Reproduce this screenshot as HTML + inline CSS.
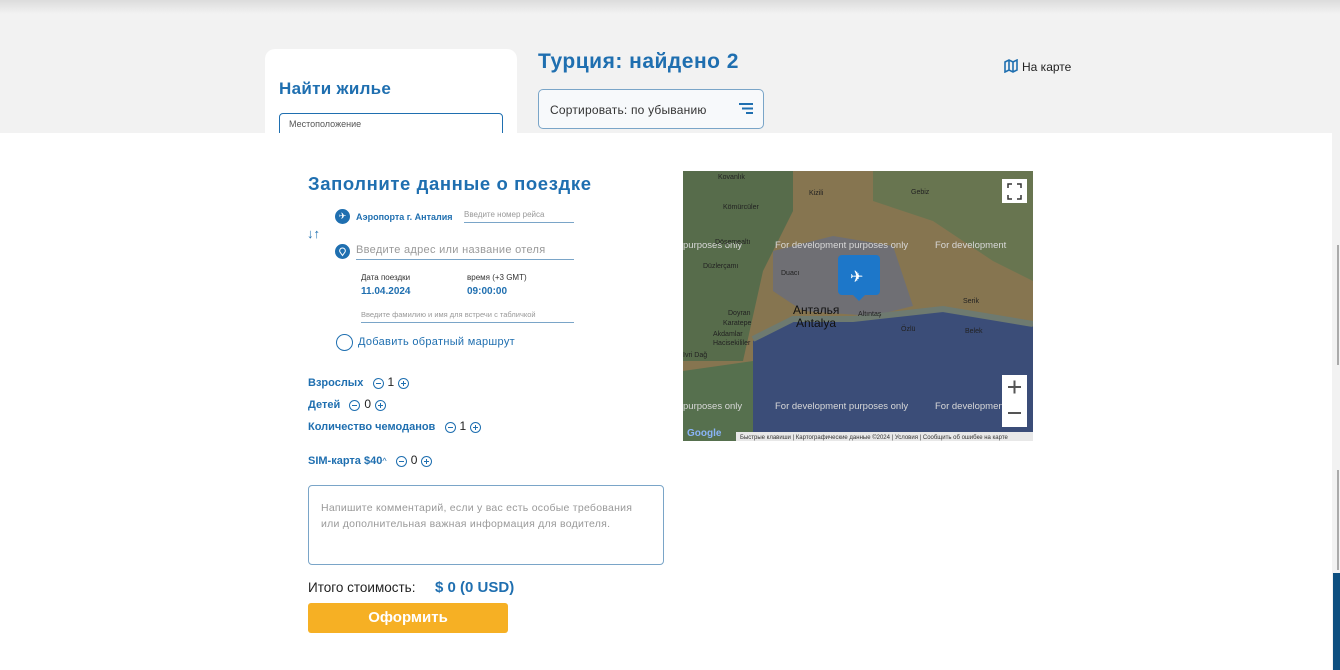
<!DOCTYPE html>
<html><head><meta charset="utf-8">
<style>
*{box-sizing:border-box;margin:0;padding:0}
body{width:1340px;height:670px;overflow:hidden;background:#f2f2f2;font-family:"Liberation Sans",sans-serif;position:relative}
.topshadow{position:absolute;left:0;top:0;width:1340px;height:14px;background:linear-gradient(#dcdcdc,#f2f2f2)}
.abs{position:absolute}
.blue{color:#1f6fb0}
.card{left:265px;top:49px;width:252px;height:100px;background:#fff;border-radius:10px}
.panel{left:0;top:133px;width:1332px;height:537px;background:#fff}
.line{border-bottom:1px solid #7aa5c8}
.ic{display:inline-block;width:11px;height:11px;border:1px solid #1f6fb0;border-radius:50%;position:relative;vertical-align:middle}
.ic:before{content:"";position:absolute;left:2px;right:2px;top:4px;height:1px;background:#1f6fb0}
.ic.p:after{content:"";position:absolute;top:2px;bottom:2px;left:4px;width:1px;background:#1f6fb0}
.cnt{font-size:11px;font-weight:bold;color:#1f6fb0;position:absolute;white-space:nowrap}
.cnt span.n{color:#222;font-weight:normal;font-size:12px;margin:0 4px}
</style></head><body>
<div class="topshadow"></div>
<div class="abs card"></div>
<div class="abs blue" style="left:279px;top:79px;font-size:17px;font-weight:bold;letter-spacing:.3px">Найти жилье</div>
<div class="abs" style="left:279px;top:113px;width:224px;height:30px;border:1px solid #1f6fb0;border-radius:4px;font-size:9px;color:#555;padding:5px 9px">Местоположение</div>
<div class="abs blue" style="left:538px;top:50px;font-size:21px;font-weight:bold;letter-spacing:.5px">Турция: найдено 2</div>
<div class="abs" style="left:538px;top:89px;width:226px;height:40px;border:1px solid #7aa5c8;border-radius:5px;background:#f7f9fb;font-size:12px;color:#333;padding:13px 11px;letter-spacing:.2px">Сортировать: по убыванию
<svg class="abs" style="left:200px;top:13px" width="14" height="12"><path d="M0 1h14M3 5.5h11M7 10h7" stroke="#1f6fb0" stroke-width="2"/></svg></div>
<div class="abs" style="left:1004px;top:59px;font-size:12px;color:#222"><svg width="14" height="14" style="vertical-align:-2px;margin-right:4px"><path d="M1 3l4-2 4 2 4-2v10l-4 2-4-2-4 2z M5 1v10 M9 3v10" fill="none" stroke="#1f6fb0" stroke-width="1.6"/></svg>На карте</div>
<div class="abs panel"></div>
<div class="abs" style="left:1332px;top:133px;width:8px;height:537px;background:#f2f2f2"></div>
<div class="abs" style="left:1337px;top:245px;width:2px;height:120px;background:#aaa"></div>
<div class="abs" style="left:1337px;top:470px;width:2px;height:100px;background:#aaa"></div>
<div class="abs" style="left:1333px;top:573px;width:7px;height:97px;background:#0d4f80"></div>

<div class="abs blue" style="left:308px;top:173px;font-size:18.5px;font-weight:bold;letter-spacing:.6px">Заполните данные о поездке</div>
<div class="abs" style="left:335px;top:209px;width:15px;height:15px;border-radius:50%;background:#1f6fb0;color:#fff;font-size:9px;text-align:center;line-height:15px">✈</div>
<div class="abs blue" style="left:356px;top:212px;font-size:9px;font-weight:bold">Аэропорта г. Анталия</div>
<div class="abs line" style="left:464px;top:210px;width:110px;height:13px;font-size:8px;color:#999">Введите номер рейса</div>
<div class="abs blue" style="left:307px;top:226px;font-size:13px;font-weight:bold">↓↑</div>
<div class="abs" style="left:335px;top:244px;width:15px;height:15px;border-radius:50%;background:#1f6fb0"><svg width="15" height="15"><path d="M7.5 11.5l-2.5-3.5a2.8 2.8 0 1 1 5 0z" fill="none" stroke="#fff" stroke-width="1"/></svg></div>
<div class="abs line" style="left:356px;top:244px;width:218px;height:16px;font-size:11px;color:#999;letter-spacing:.3px">Введите адрес или название отеля</div>
<div class="abs" style="left:361px;top:273px;font-size:8px;color:#333">Дата поездки</div>
<div class="abs blue" style="left:361px;top:286px;font-size:10px;font-weight:bold">11.04.2024</div>
<div class="abs" style="left:467px;top:273px;font-size:8px;color:#333">время (+3 GMT)</div>
<div class="abs blue" style="left:467px;top:286px;font-size:10px;font-weight:bold">09:00:00</div>
<div class="abs line" style="left:361px;top:310px;width:213px;height:13px;font-size:7.5px;color:#999">Введите фамилию и имя для встречи с табличкой</div>
<div class="abs" style="left:336px;top:334px;width:17px;height:17px;border-radius:50%;border:1px solid #1f6fb0"></div>
<div class="abs blue" style="left:358px;top:336px;font-size:11px;letter-spacing:.3px">Добавить обратный маршрут</div>

<div class="cnt" style="left:308px;top:375px">Взрослых &nbsp;&nbsp;<span class="ic"></span><span class="n">1</span><span class="ic p"></span></div>
<div class="cnt" style="left:308px;top:397px">Детей &nbsp;&nbsp;<span class="ic"></span><span class="n">0</span><span class="ic p"></span></div>
<div class="cnt" style="left:308px;top:419px">Количество чемоданов &nbsp;&nbsp;<span class="ic"></span><span class="n">1</span><span class="ic p"></span></div>
<div class="cnt" style="left:308px;top:453px">SIM-карта $40<span style="font-weight:normal;font-size:9px">^</span> &nbsp;&nbsp;<span class="ic"></span><span class="n">0</span><span class="ic p"></span></div>

<div class="abs" style="left:308px;top:485px;width:356px;height:80px;border:1px solid #7aa5c8;border-radius:4px;padding:14px 12px;font-size:10.5px;line-height:16px;color:#999;letter-spacing:.25px">Напишите комментарий, если у вас есть особые требования или дополнительная важная информация для водителя.</div>
<div class="abs" style="left:308px;top:580px;font-size:13.5px;color:#222">Итого стоимость:</div>
<div class="abs blue" style="left:435px;top:579px;font-size:15px;font-weight:bold">$ 0 (0 USD)</div>
<div class="abs" style="left:308px;top:603px;width:200px;height:30px;background:#f6b024;border-radius:3px;color:#fff;font-size:15px;font-weight:bold;text-align:center;line-height:30px">Оформить</div>

<svg class="abs" style="left:683px;top:171px" width="350" height="270" font-family="Liberation Sans" >
<rect width="350" height="270" fill="#867550"/>
<path d="M0 0h110v40l-30 60-20 90-60 0z" fill="#4f6b4a" opacity=".85"/>
<path d="M0 200l70 -10 0 80h-70z" fill="#56704e"/>
<path d="M190 0h160v110l-40-20-60-40-60-20z" fill="#607650" opacity=".8"/>
<path d="M90 80l60-15 60 10 20 60-40 10-70-5-30-20z" fill="#6f6f74"/>
<path d="M70 170l40-20 60 0 90 -10 90 15v135h-280l0-70z" fill="#3b4d78"/>
<path d="M70 168l40-20 60 0 90-10 90 15" fill="none" stroke="#6e7a70" stroke-width="6"/>
<g font-size="9.5" fill="#d8d8d8">
<text x="0" y="77">purposes only</text><text x="92" y="77">For development purposes only</text><text x="252" y="77">For development</text>
<text x="0" y="238">purposes only</text><text x="92" y="238">For development purposes only</text><text x="252" y="238">For development</text>
</g>
<g font-size="7" fill="#222"><text x="35" y="8">Kovanlık</text><text x="126" y="24">Kizili</text><text x="228" y="23">Gebiz</text><text x="40" y="38">Kömürcüler</text><text x="32" y="73">Döşemealtı</text><text x="20" y="97">Düzlerçamı</text><text x="98" y="104">Duacı</text><text x="45" y="144">Doyran</text><text x="40" y="154">Karatepe</text><text x="30" y="165">Akdamlar</text><text x="30" y="174">Hacisekililer</text><text x="175" y="145">Altıntaş</text><text x="218" y="160">Özlü</text><text x="280" y="132">Serik</text><text x="282" y="162">Belek</text><text x="0" y="186">Ivri Dağ</text></g>
<text x="110" y="143" font-size="12" fill="#111">Анталья</text><text x="113" y="156" font-size="12" fill="#111">Antalya</text>
<rect x="155" y="84" width="42" height="40" rx="4" fill="#1d77c9"/><path d="M170 124l6 6 6-6z" fill="#1d77c9"/>
<text x="167" y="111" font-size="16" fill="#fff">✈</text>
<rect x="319" y="8" width="25" height="24" fill="#fff"/><path d="M325 17v-4h4M338 17v-4h-4M325 24v4h4M338 24v4h-4" stroke="#333" stroke-width="1.5" fill="none"/>
<rect x="319" y="204" width="25" height="52" fill="#fff"/><path d="M325 216h13M331.5 209.5v13M325 242h13" stroke="#555" stroke-width="2"/>
<text x="4" y="265" font-size="10" font-weight="bold" fill="#8ab4f8">Google</text>
<rect x="53" y="261" width="297" height="9" fill="#e8e8e8"/>
<text x="57" y="268" font-size="6" fill="#333">Быстрые клавиши | Картографические данные ©2024 | Условия | Сообщить об ошибке на карте</text>
</svg>
</body></html>
